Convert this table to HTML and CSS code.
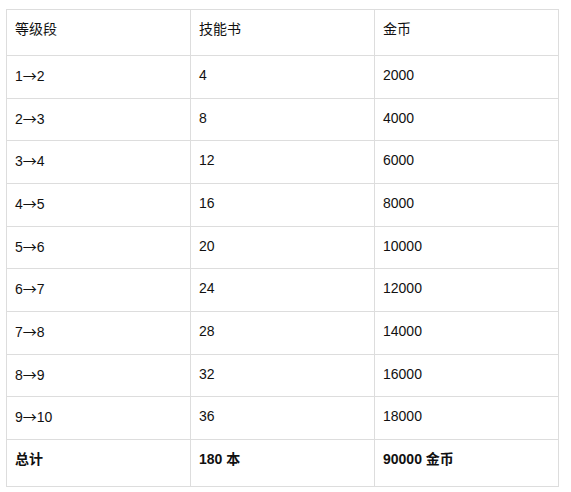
FILE: index.html
```html
<!DOCTYPE html>
<html lang="zh">
<head>
<meta charset="utf-8">
<title>技能书与金币</title>
<link rel="stylesheet" href="styles.css">
</head>
<body>
<table class="cost-table">
  <thead>
    <tr class="head-row"><th>等级段</th><th>技能书</th><th>金币</th></tr>
  </thead>
  <tbody>
    <tr class="data-row"><td>1<span class="arrow">→</span>2</td><td>4</td><td>2000</td></tr>
    <tr class="data-row"><td>2<span class="arrow">→</span>3</td><td>8</td><td>4000</td></tr>
    <tr class="data-row"><td>3<span class="arrow">→</span>4</td><td>12</td><td>6000</td></tr>
    <tr class="data-row"><td>4<span class="arrow">→</span>5</td><td>16</td><td>8000</td></tr>
    <tr class="data-row"><td>5<span class="arrow">→</span>6</td><td>20</td><td>10000</td></tr>
    <tr class="data-row"><td>6<span class="arrow">→</span>7</td><td>24</td><td>12000</td></tr>
    <tr class="data-row"><td>7<span class="arrow">→</span>8</td><td>28</td><td>14000</td></tr>
    <tr class="data-row"><td>8<span class="arrow">→</span>9</td><td>32</td><td>16000</td></tr>
    <tr class="data-row"><td>9<span class="arrow">→</span>10</td><td>36</td><td>18000</td></tr>
    <tr class="total-row"><td>总计</td><td>180 本</td><td>90000 金币</td></tr>
  </tbody>
</table>
</body>
</html>
```

FILE: styles.css
```css
html, body {
  margin: 0;
  background: #ffffff;
}
body {
  padding: 9px 0 0 6px;
  font-family: "Liberation Sans", Arial, "Noto Sans CJK SC", sans-serif;
  font-size: 14px;
  color: #111111;
}
.cost-table {
  border-collapse: collapse;
  table-layout: fixed;
  width: 553px;
}
.cost-table th,
.cost-table td {
  border: 1px solid #dddddd;
  padding: 11px 8px 0 8px;
  text-align: left;
  vertical-align: top;
  line-height: 16px;
  font-weight: normal;
  box-sizing: border-box;
}
.arrow {
  font-family: "Noto Sans CJK SC", sans-serif;
}
.head-row {
  height: 46px;
}
.data-row {
  height: 42.67px;
}
.total-row {
  height: 47px;
}
.total-row td {
  font-weight: bold;
}
```
